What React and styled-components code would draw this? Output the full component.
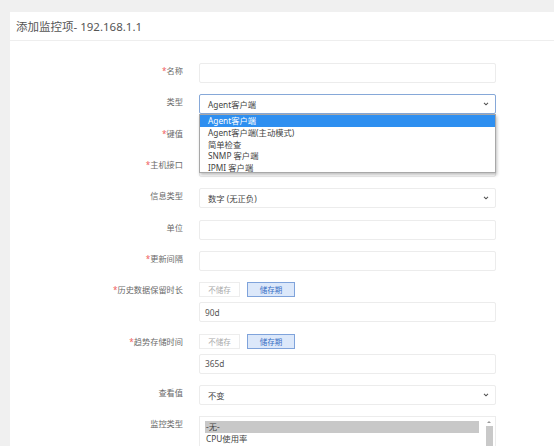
import React from "react";
import styled, { createGlobalStyle } from "styled-components";

const GlobalStyle = createGlobalStyle`
  body {
    margin: 0;
    background: #f0f0f0;
    font-family: "Noto Sans", "Noto Sans CJK SC", sans-serif;
  }
`;

const typeOptions = [
  "Agent客户端",
  "Agent客户端(主动模式)",
  "简单检查",
  "SNMP 客户端",
  "IPMI 客户端",
];

function Chevron() {
  return (
    <svg width="6" height="4" viewBox="0 0 6 4">
      <path d="M1 0.8l2 2 2-2" fill="none" stroke="#555" strokeWidth="1.1" />
    </svg>
  );
}

function Select({ value, focused, children }) {
  return (
    <StSelect $focused={focused}>
      <span>{value}</span>
      <Chevron />
      {children}
    </StSelect>
  );
}

function Storage({ value }) {
  return (
    <StStack>
      <StToggle>
        <StToggleBtn>不储存</StToggleBtn>
        <StToggleBtn $active>储存期</StToggleBtn>
      </StToggle>
      <StInput>{value}</StInput>
    </StStack>
  );
}

function Row({ label, required, children }) {
  return (
    <StRow>
      <StLabel>
        {required && <StStar>*</StStar>}
        {label}
      </StLabel>
      {children}
    </StRow>
  );
}

export default function App() {
  return (
    <>
      <GlobalStyle />
      <StPage>
        <StCard>
          <StHeader>添加监控项- 192.168.1.1</StHeader>
          <StBody>
            <Row label="名称" required>
              <StInput />
            </Row>
            <Row label="类型">
              <Select value="Agent客户端" focused>
                <StDropdown>
                  {typeOptions.map((opt, i) => (
                    <StOption key={opt} $active={i === 0}>
                      {opt}
                    </StOption>
                  ))}
                </StDropdown>
              </Select>
            </Row>
            <Row label="键值" required>
              <StInput />
            </Row>
            <Row label="主机接口" required>
              <StInput />
            </Row>
            <Row label="信息类型">
              <Select value="数字 (无正负)" />
            </Row>
            <Row label="单位">
              <StInput />
            </Row>
            <Row label="更新间隔" required>
              <StInput />
            </Row>
            <Row label="历史数据保留时长" required>
              <Storage value="90d" />
            </Row>
            <Row label="趋势存储时间" required>
              <Storage value="365d" />
            </Row>
            <Row label="查看值">
              <Select value="不变" />
            </Row>
            <Row label="监控类型">
              <StListBox>
                <StListItems>
                  <StListItem $selected>-无-</StListItem>
                  <StListItem>CPU使用率</StListItem>
                </StListItems>
                <StScrollbar>
                  <StScrollArrow />
                  <StScrollThumb />
                </StScrollbar>
              </StListBox>
            </Row>
          </StBody>
        </StCard>
      </StPage>
    </>
  );
}

const StPage = styled.div`
  padding: 12px 0 0 10px;
  height: 434px;
  overflow: hidden;
`;

const StCard = styled.div`
  background: #fff;
  height: 100%;
`;

const StHeader = styled.div`
  height: 29px;
  box-sizing: border-box;
  border-bottom: 1px solid #eeeeee;
  padding-left: 6px;
  display: flex;
  align-items: center;
  font-size: 11.5px;
  color: #555;
`;

const StBody = styled.div`
  padding-top: 22px;
`;

const StRow = styled.div`
  display: grid;
  grid-template-columns: 173px 297px;
  column-gap: 16px;
  align-items: start;
  margin-bottom: 11.33px;
`;

const StLabel = styled.div`
  text-align: right;
  font-size: 8.2px;
  line-height: 13px;
  color: #6a6a6a;
  padding-top: 1px;
`;

const StStar = styled.span`
  color: #f06060;
`;

const StInput = styled.div`
  box-sizing: border-box;
  height: 20px;
  border: 1px solid #ececec;
  border-radius: 2px;
  padding: 0 5px;
  display: flex;
  align-items: center;
  font-size: 8.3px;
  color: #555;
`;

const StSelect = styled.div`
  position: relative;
  box-sizing: border-box;
  height: 20px;
  border: 1px solid ${(p) => (p.$focused ? "#86a8d8" : "#ececec")};
  border-radius: 2px;
  padding: 0 6px 0 8px;
  display: flex;
  align-items: center;
  justify-content: space-between;
  font-size: 8.3px;
  color: #444;
`;

const StDropdown = styled.div`
  position: absolute;
  top: 19px;
  left: -1px;
  right: -1px;
  height: 59px;
  overflow: hidden;
  background: #fff;
  border: 1px solid #a8a8a8;
  box-shadow: 1px 2px 3px rgba(0, 0, 0, 0.25);
  box-sizing: border-box;
  z-index: 2;
`;

const StOption = styled.div`
  height: 11.7px;
  line-height: 11.7px;
  padding-left: 8px;
  font-size: 8.3px;
  color: ${(p) => (p.$active ? "#fff" : "#444")};
  background: ${(p) => (p.$active ? "#2e8ff0" : "transparent")};
`;

const StStack = styled.div`
  display: flex;
  flex-direction: column;
  gap: 5px;
`;

const StToggle = styled.div`
  display: flex;
  gap: 7px;
`;

const StToggleBtn = styled.div`
  box-sizing: border-box;
  height: 15px;
  width: ${(p) => (p.$active ? "48px" : "41px")};
  display: flex;
  align-items: center;
  justify-content: center;
  font-size: 7.5px;
  border: 1px solid ${(p) => (p.$active ? "#7fa3db" : "#ededed")};
  background: ${(p) => (p.$active ? "#dce8fa" : "#fff")};
  color: ${(p) => (p.$active ? "#3a6fc4" : "#aaa")};
`;

const StListBox = styled.div`
  box-sizing: border-box;
  height: 40px;
  border: 1px solid #ececec;
  border-bottom: none;
  display: flex;
  padding: 4px 2px 0 5px;
  gap: 6px;
`;

const StListItems = styled.div`
  flex: 1;
`;

const StListItem = styled.div`
  height: 11.5px;
  line-height: 11.5px;
  font-size: 8.3px;
  padding-left: 1px;
  color: #444;
  background: ${(p) => (p.$selected ? "#c8c8c8" : "transparent")};
`;

const StScrollbar = styled.div`
  width: 8px;
  display: flex;
  flex-direction: column;
  align-items: center;
  gap: 3px;
`;

const StScrollArrow = styled.div`
  width: 0;
  height: 0;
  border-left: 2px solid transparent;
  border-right: 2px solid transparent;
  border-bottom: 2px solid #999;
`;

const StScrollThumb = styled.div`
  width: 7px;
  flex: 1;
  background: #c9c9c9;
`;
